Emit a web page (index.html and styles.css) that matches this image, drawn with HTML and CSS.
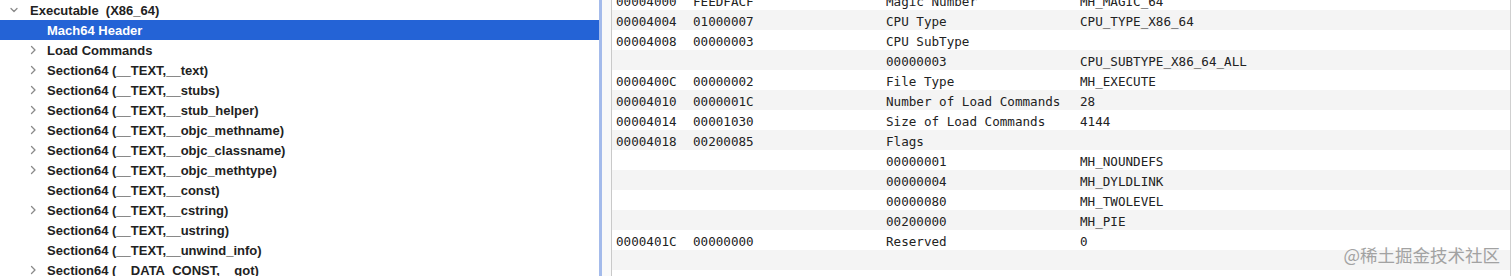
FILE: index.html
```html
<!DOCTYPE html>
<html lang="en">
<head>
    <meta charset="UTF-8">
    <meta name="viewport" content="width=device-width, initial-scale=1.0">
    <title>Mach64 Header</title>
    <link rel="stylesheet" href="styles.css">
</head>
<body>
    <div class="window">
        <!-- Arbol de la izquierda -->
        <div class="tree">
            <div class="node level-0">
                <svg class="chev" viewBox="0 0 12 12"><polyline points="3,4.5 6,7.5 9,4.5"/></svg>
                <span class="label">Executable  (X86_64)</span>
            </div>
            <div class="node level-1 selected">
                <span class="chev"></span>
                <span class="label">Mach64 Header</span>
            </div>
            <div class="node level-1">
                <svg class="chev" viewBox="0 0 12 12"><polyline points="6.5,2.5 10,6 6.5,9.5"/></svg>
                <span class="label">Load Commands</span>
            </div>
            <div class="node level-1">
                <svg class="chev" viewBox="0 0 12 12"><polyline points="6.5,2.5 10,6 6.5,9.5"/></svg>
                <span class="label">Section64 (__TEXT,__text)</span>
            </div>
            <div class="node level-1">
                <svg class="chev" viewBox="0 0 12 12"><polyline points="6.5,2.5 10,6 6.5,9.5"/></svg>
                <span class="label">Section64 (__TEXT,__stubs)</span>
            </div>
            <div class="node level-1">
                <svg class="chev" viewBox="0 0 12 12"><polyline points="6.5,2.5 10,6 6.5,9.5"/></svg>
                <span class="label">Section64 (__TEXT,__stub_helper)</span>
            </div>
            <div class="node level-1">
                <svg class="chev" viewBox="0 0 12 12"><polyline points="6.5,2.5 10,6 6.5,9.5"/></svg>
                <span class="label">Section64 (__TEXT,__objc_methname)</span>
            </div>
            <div class="node level-1">
                <svg class="chev" viewBox="0 0 12 12"><polyline points="6.5,2.5 10,6 6.5,9.5"/></svg>
                <span class="label">Section64 (__TEXT,__objc_classname)</span>
            </div>
            <div class="node level-1">
                <svg class="chev" viewBox="0 0 12 12"><polyline points="6.5,2.5 10,6 6.5,9.5"/></svg>
                <span class="label">Section64 (__TEXT,__objc_methtype)</span>
            </div>
            <div class="node level-1">
                <span class="chev"></span>
                <span class="label">Section64 (__TEXT,__const)</span>
            </div>
            <div class="node level-1">
                <svg class="chev" viewBox="0 0 12 12"><polyline points="6.5,2.5 10,6 6.5,9.5"/></svg>
                <span class="label">Section64 (__TEXT,__cstring)</span>
            </div>
            <div class="node level-1">
                <span class="chev"></span>
                <span class="label">Section64 (__TEXT,__ustring)</span>
            </div>
            <div class="node level-1">
                <span class="chev"></span>
                <span class="label">Section64 (__TEXT,__unwind_info)</span>
            </div>
            <div class="node level-1">
                <svg class="chev" viewBox="0 0 12 12"><polyline points="6.5,2.5 10,6 6.5,9.5"/></svg>
                <span class="label">Section64 (__DATA_CONST,__got)</span>
            </div>
        </div>

        <div class="splitter"></div>

        <!-- Tabla de la derecha -->
        <div class="table">
            <div class="rows">
                <div class="row"><span>00004000</span><span>FEEDFACF</span><span>Magic Number</span><span>MH_MAGIC_64</span></div>
                <div class="row"><span>00004004</span><span>01000007</span><span>CPU Type</span><span>CPU_TYPE_X86_64</span></div>
                <div class="row"><span>00004008</span><span>00000003</span><span>CPU SubType</span><span></span></div>
                <div class="row"><span></span><span></span><span>00000003</span><span>CPU_SUBTYPE_X86_64_ALL</span></div>
                <div class="row"><span>0000400C</span><span>00000002</span><span>File Type</span><span>MH_EXECUTE</span></div>
                <div class="row"><span>00004010</span><span>0000001C</span><span>Number of Load Commands</span><span>28</span></div>
                <div class="row"><span>00004014</span><span>00001030</span><span>Size of Load Commands</span><span>4144</span></div>
                <div class="row"><span>00004018</span><span>00200085</span><span>Flags</span><span></span></div>
                <div class="row"><span></span><span></span><span>00000001</span><span>MH_NOUNDEFS</span></div>
                <div class="row"><span></span><span></span><span>00000004</span><span>MH_DYLDLINK</span></div>
                <div class="row"><span></span><span></span><span>00000080</span><span>MH_TWOLEVEL</span></div>
                <div class="row"><span></span><span></span><span>00200000</span><span>MH_PIE</span></div>
                <div class="row"><span>0000401C</span><span>00000000</span><span>Reserved</span><span>0</span></div>
                <div class="row"><span></span><span></span><span></span><span></span></div>
                <div class="row"><span></span><span></span><span></span><span></span></div>
            </div>
            <div class="watermark">@稀土掘金技术社区</div>
        </div>
    </div>
</body>
</html>
```

FILE: styles.css
```css
body {
    margin: 0;
    padding: 0;
    background-color: #ffffff;
    overflow: hidden;
}

.window {
    display: flex;
    height: 276px;
    overflow: hidden;
}

/* Panel izquierdo */
.tree {
    width: 599px;
    flex-shrink: 0;
    font-family: "Liberation Sans", Arial, sans-serif;
    font-weight: bold;
    font-size: 13px;
    color: #222222;
    border-right: 3px solid #a4bbeb;
}

.node {
    display: flex;
    align-items: center;
    height: 20px;
    white-space: pre;
}

.level-0 {
    padding-left: 8px;
}

.level-1 {
    padding-left: 25px;
}

.chev {
    width: 12px;
    height: 12px;
    margin-right: 10px;
    flex-shrink: 0;
}

.chev polyline {
    fill: none;
    stroke: #8a8a8a;
    stroke-width: 1.3;
    stroke-linecap: round;
    stroke-linejoin: round;
}

.selected {
    background-color: #2463d6;
    color: #ffffff;
}

.splitter {
    width: 9px;
    flex-shrink: 0;
    background-color: #f9f9f9;
    border-right: 1px solid #c9c9c9;
}

/* Panel derecho */
.table {
    position: relative;
    flex: 1;
    border-right: 1px solid #cfcfcf;
    margin-right: 1px;
    overflow: hidden;
    font-family: "DejaVu Sans Mono", "Liberation Mono", monospace;
    font-size: 12.6px;
    color: #222222;
}

.rows {
    margin-top: -10px;
}

.row {
    display: grid;
    grid-template-columns: 77px 193px 194px 1fr;
    align-items: center;
    height: 20px;
    padding-left: 4px;
    padding-top: 2px;
    box-sizing: border-box;
    white-space: pre;
}

.row:nth-child(even) {
    background-color: #f4f4f4;
}

.watermark {
    position: absolute;
    right: 10px;
    bottom: 9px;
    font-family: "Noto Sans CJK SC", sans-serif;
    font-size: 17.5px;
    color: #a2a2a2;
}
```
